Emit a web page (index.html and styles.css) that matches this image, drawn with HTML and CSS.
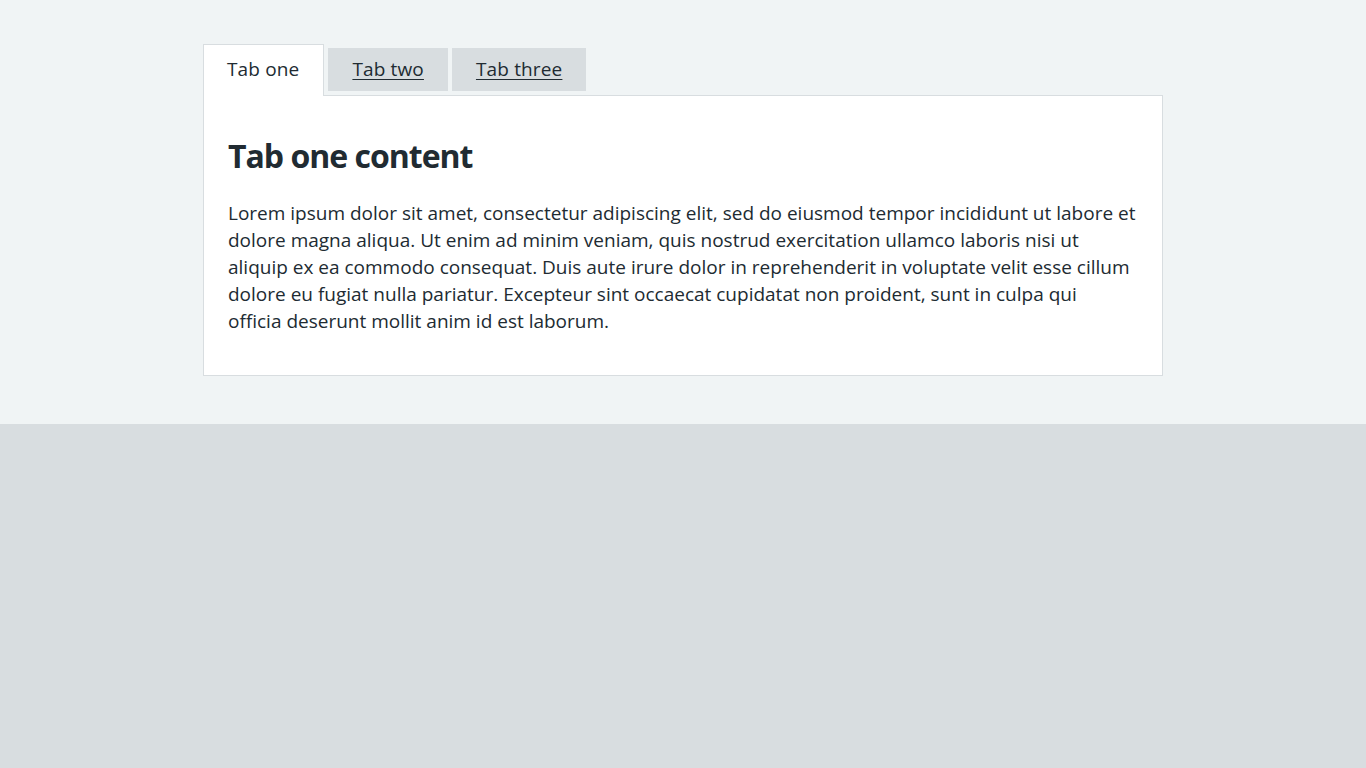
FILE: index.html
```html
<!DOCTYPE html>
<html lang="en">
<head>
<meta charset="utf-8">
<title>Tabs</title>
<link rel="stylesheet" href="styles.css">
</head>
<body>
<main class="page">
  <div class="container">
    <div class="tabs">
      <ul class="tabs-list">
        <li class="tab tab-active"><a class="tab-link" href="#tab-one">Tab one</a></li>
        <li class="tab"><a class="tab-link" href="#tab-two">Tab two</a></li>
        <li class="tab"><a class="tab-link" href="#tab-three">Tab three</a></li>
      </ul>
      <section class="panel" id="tab-one">
        <h2 class="panel-title">Tab one content</h2>
        <p class="panel-text">Lorem ipsum dolor sit amet, consectetur adipiscing elit, sed do eiusmod tempor incididunt ut labore et dolore magna aliqua. Ut enim ad minim veniam, quis nostrud exercitation ullamco laboris nisi ut aliquip ex ea commodo consequat. Duis aute irure dolor in reprehenderit in voluptate velit esse cillum dolore eu fugiat nulla pariatur. Excepteur sint occaecat cupidatat non proident, sunt in culpa qui <span class="nowrap">officia deserunt</span> mollit anim id est laborum.</p>
      </section>
    </div>
  </div>
</main>
</body>
</html>
```

FILE: styles.css
```css
html, body {
  margin: 0;
  padding: 0;
}
body {
  background: #d8dde0;
  color: #212b32;
  font-family: "Open Sans", "Noto Sans", sans-serif;
  min-height: 768px;
}
.page {
  display: block;
  background: #f0f4f5;
  padding: 48px 0;
}
.container {
  width: 960px;
  margin: 0 auto;
}
.tabs-list {
  display: flex;
  align-items: flex-start;
  list-style: none;
  margin: 0;
  padding: 0;
}
.tab {
  background: #d8dde0;
  margin: 0 4px 4px 0;
  padding: 8px 24px;
  font-size: 19px;
  line-height: 27px;
  letter-spacing: 0.15px;
}
.tab-link {
  color: #212b32;
  text-decoration: underline;
  text-underline-offset: 3px;
  text-decoration-thickness: 1px;
}
.tab-active {
  position: relative;
  z-index: 1;
  background: #ffffff;
  border: 1px solid #d8dde0;
  border-bottom: 0;
  margin-top: -4px;
  margin-bottom: -1px;
  padding: 11px 24px 13px 23px;
}
.tab-active .tab-link {
  text-decoration: none;
}
.panel {
  background: #ffffff;
  border: 1px solid #d8dde0;
  padding: 40px 24px;
}
.panel-title {
  margin: 0 0 24px;
  font-size: 32px;
  line-height: 40px;
  font-weight: 700;
  letter-spacing: -1px;
}
.panel-text {
  margin: 0;
  font-size: 19px;
  line-height: 27px;
}
.nowrap {
  white-space: nowrap;
}
```
